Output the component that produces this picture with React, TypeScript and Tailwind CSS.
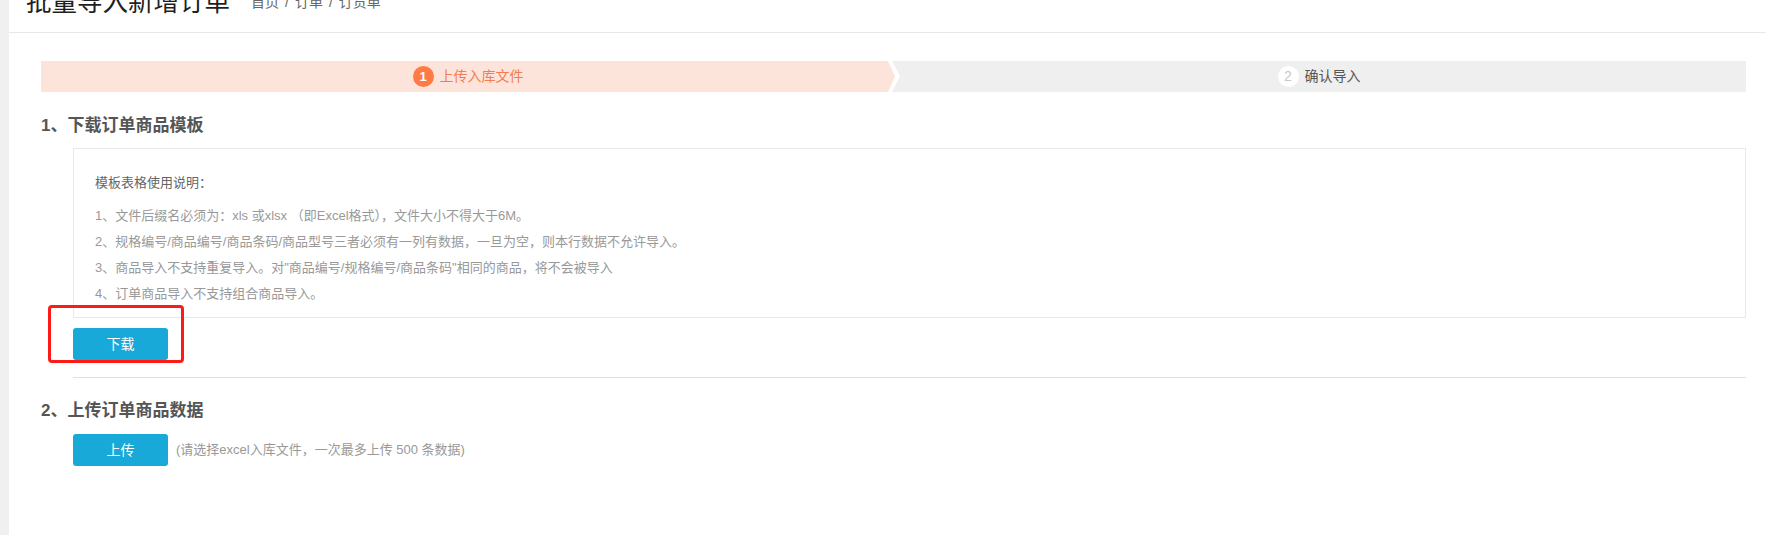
const notes = [
  '1、文件后缀名必须为：xls 或xlsx （即Excel格式），文件大小不得大于6M。',
  '2、规格编号/商品编号/商品条码/商品型号三者必须有一列有数据，一旦为空，则本行数据不允许导入。',
  '3、商品导入不支持重复导入。对"商品编号/规格编号/商品条码"相同的商品，将不会被导入',
  '4、订单商品导入不支持组合商品导入。',
];

export default function App() {
  return (
    <div className="flex h-[535px] overflow-hidden bg-white font-['Liberation_Sans','Noto_Sans_CJK_SC',sans-serif]">
      {/* 左侧灰条 */}
      <div className="w-[9px] shrink-0 bg-[#f0f0f0]" />

      <div className="min-w-0 flex-1">
        {/* 页头 */}
        <div className="-mt-[13px] flex h-[46px] items-start border-b border-[#e8e8e8] pl-[17px]">
          <h1 className="text-[25.5px] font-normal leading-[30px] text-[#1f1f1f]">批量导入新增订单</h1>
          <div className="ml-[21px] mt-[5px] text-[14px] leading-[20px] text-[#666]">
            首页<span className="mx-[6px]">/</span>订单<span className="mx-[6px]">/</span>订货单
          </div>
        </div>

        <div className="pl-[32px] pr-[20px]">
          {/* 步骤条 */}
          <div className="mt-[28px] flex h-[31px] text-[14px]">
            <div className="flex flex-1 items-center justify-center gap-[6px] bg-[#fde4db] [clip-path:polygon(0_0,calc(100%_-_7px)_0,100%_50%,calc(100%_-_7px)_100%,0_100%)]">
              <span className="flex h-[21px] w-[21px] items-center justify-center rounded-full bg-[#ff7a45] text-[13px] font-bold text-white">
                1
              </span>
              <span className="text-[#f47c4f]">上传入库文件</span>
            </div>
            <div className="-ml-[3px] flex flex-1 items-center justify-center gap-[6px] bg-[#efefef] [clip-path:polygon(0_0,100%_0,100%_100%,0_100%,8px_50%)]">
              <span className="flex h-[21px] w-[21px] items-center justify-center rounded-full bg-white text-[14px] text-[#c8c8c8]">
                2
              </span>
              <span className="text-[#555]">确认导入</span>
            </div>
          </div>

          {/* 1、下载模板 */}
          <h2 className="mt-[22px] text-[17px] font-bold leading-[24px] text-[#555]">1、下载订单商品模板</h2>
          <div className="ml-[32px] mt-[10px] border border-[#e9e9e9] pb-[10px] pl-[21px] pt-[24px]">
            <p className="text-[13px] leading-[20px] text-[#666]">模板表格使用说明：</p>
            <ul className="mt-[10px]">
              {notes.map((n) => (
                <li key={n} className="text-[13px] leading-[26px] text-[#999]">
                  {n}
                </li>
              ))}
            </ul>
          </div>

          <div className="relative ml-[32px] mt-[10px] w-[95px]">
            <button className="h-[32px] w-[95px] rounded-[3px] bg-[#19a9d9] text-[14px] text-white">下载</button>
            {/* 标注框 */}
            <div className="pointer-events-none absolute -left-[25px] -top-[23px] h-[58px] w-[136px] rounded-[4px] border-[3px] border-[#ff1a1a]" />
          </div>

          <div className="ml-[32px] mt-[17px] h-px bg-[#e0e0e0]" />

          {/* 2、上传数据 */}
          <h2 className="mt-[21px] text-[17px] font-bold leading-[24px] text-[#555]">2、上传订单商品数据</h2>
          <div className="ml-[32px] mt-[11px] flex items-center gap-[8px]">
            <button className="h-[32px] w-[95px] rounded-[3px] bg-[#19a9d9] text-[14px] text-white">上传</button>
            <span className="text-[13px] text-[#999]">(请选择excel入库文件，一次最多上传 500 条数据)</span>
          </div>
        </div>
      </div>
    </div>
  );
}
